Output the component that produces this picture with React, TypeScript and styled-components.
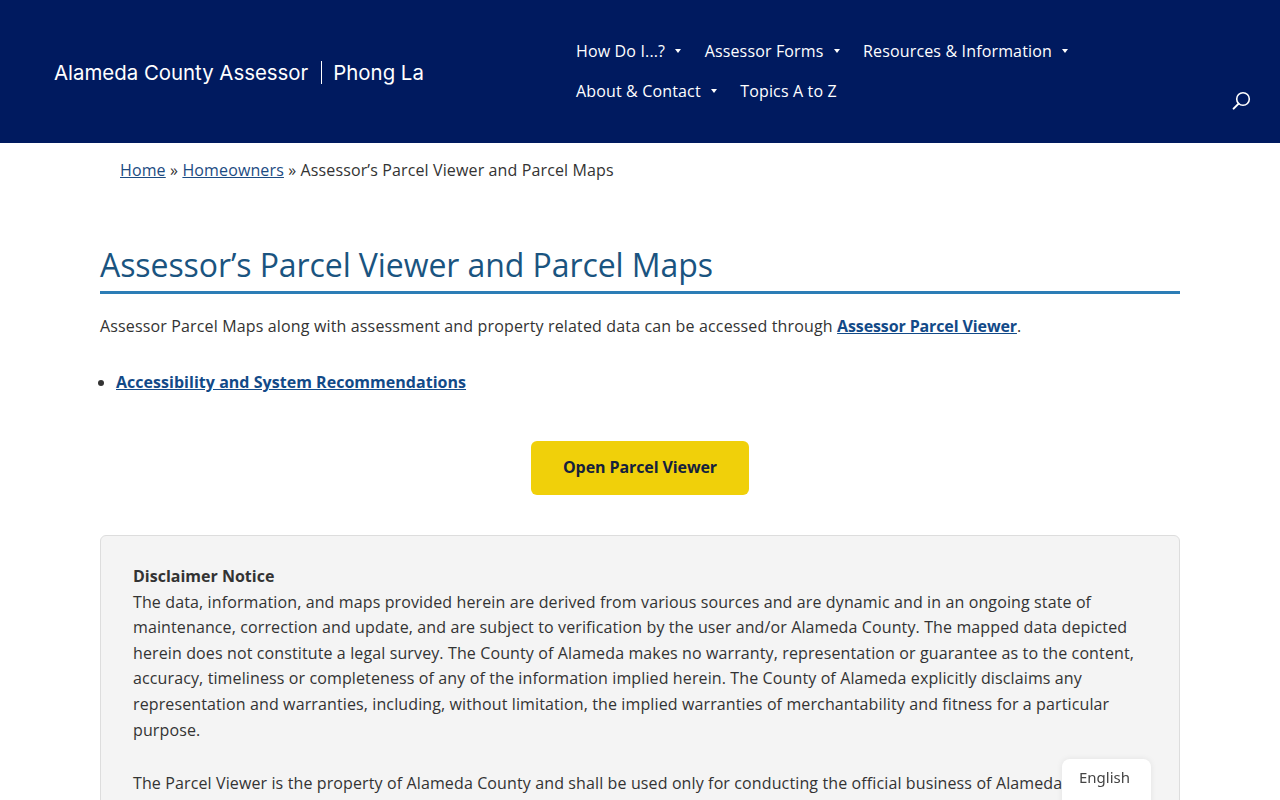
import React from "react";
import styled, { createGlobalStyle } from "styled-components";

const Global = createGlobalStyle`
  html, body { margin: 0; padding: 0; height: 800px; overflow: hidden; background: #fff; }
  body { font-family: "Open Sans", "Noto Sans", sans-serif; font-size: 16px; color: #333; letter-spacing: 0.13px; }
  strong, a { letter-spacing: 0; }
`;

const Header = styled.header`
  height: 143px;
  background: #001a5f;
  display: flex;
  position: relative;
`;
const Logo = styled.div`
  width: 576px;
  padding: 1px 0 0 54px;
  box-sizing: border-box;
  display: flex;
  align-items: center;
  height: 143px;
  color: #fff;
  font-family: "Inter", sans-serif;
  font-size: 20.4px;
  letter-spacing: 0;
`;
const Divider = styled.span`
  width: 1px;
  height: 23px;
  background: #fff;
  margin: 0 11px 0 13px;
`;
const Nav = styled.nav`
  display: flex;
  flex-wrap: wrap;
  align-content: flex-start;
  width: 560px;
  padding-top: 31px;
  column-gap: 23.5px;
`;
const NavItem = styled.a`
  display: flex;
  align-items: center;
  height: 40px;
  color: #fff;
  font-size: 16px;
  font-weight: 400;
  letter-spacing: 0.15px;
  white-space: nowrap;
`;
const Caret = styled.span`
  width: 0;
  height: 0;
  margin-left: 10px;
  border-left: 3px solid transparent;
  border-right: 3px solid transparent;
  border-top: 4px solid #fff;
`;
const SearchIcon = styled.svg`
  position: absolute;
  left: 1231px;
  top: 91px;
  width: 20px;
  height: 20px;
`;
const Crumbs = styled.div`
  padding: 16px 0 0 120px;
  line-height: 22px;
  height: 38px;
  a { color: #1c4b82; letter-spacing: 0.13px; }
`;
const Main = styled.main`
  width: 1080px;
  margin: 0 auto;
`;
const Title = styled.h1`
  margin: 44px 0 0;
  padding-bottom: 2px;
  font-size: 32px;
  font-weight: 400;
  letter-spacing: -0.08px;
  line-height: 48px;
  color: #1a5480;
  border-bottom: 3px solid #2c7db6;
`;
const Para = styled.p`
  margin: 19px 0 0;
  line-height: 26px;
  letter-spacing: 0.15px;
  a { color: #124a88; font-weight: 700; letter-spacing: -0.12px; }
`;
const Bullets = styled.ul`
  margin: 30px 0 0;
  padding-left: 16px;
  line-height: 26px;
  a { color: #124a88; font-weight: 700; letter-spacing: 0.03px; }
`;
const ButtonRow = styled.div`
  display: flex;
  justify-content: center;
  margin-top: 46px;
`;
const Button = styled.a`
  width: 218px;
  height: 54px;
  padding-bottom: 2px;
  box-sizing: border-box;
  display: flex;
  align-items: center;
  justify-content: center;
  background: #f0d00a;
  border-radius: 6px;
  color: #14213d;
  font-weight: 700;
  letter-spacing: -0.1px;
`;
const Notice = styled.section`
  margin-top: 40px;
  padding: 28px 32px;
  background: #f4f4f4;
  border: 1px solid #ddd;
  border-radius: 6px;
  line-height: 25.6px;
  letter-spacing: 0.12px;
  strong { letter-spacing: 0; }
  p { margin: 0 0 27.6px; }
`;
const Lang = styled.div`
  position: fixed;
  left: 1062px;
  top: 759px;
  width: 89px;
  height: 60px;
  box-sizing: border-box;
  padding: 7px 0 0 17px;
  background: #fff;
  border-radius: 8px;
  box-shadow: 0 0 6px rgba(0, 0, 0, 0.08);
  font-family: "Noto Sans", sans-serif;
  font-size: 15px;
  letter-spacing: 0;
  line-height: 22px;
  color: #444;
`;

export default function App() {
  return (
    <>
      <Global />
      <Header>
        <Logo>Alameda County Assessor<Divider />Phong La</Logo>
        <Nav>
          <NavItem>How Do I...?<Caret /></NavItem>
          <NavItem>Assessor Forms<Caret /></NavItem>
          <NavItem>Resources &amp; Information<Caret /></NavItem>
          <NavItem>About &amp; Contact<Caret /></NavItem>
          <NavItem>Topics A to Z</NavItem>
        </Nav>
        <SearchIcon viewBox="0 0 20 20" fill="none" stroke="#fff" strokeWidth="1.6">
          <circle cx="12" cy="8" r="6.3" />
          <path d="M7.6 12.6 L2.6 17.6" strokeWidth="2" strokeLinecap="round" />
        </SearchIcon>
      </Header>
      <Crumbs>
        <a href="#">Home</a> » <a href="#">Homeowners</a> » Assessor’s Parcel Viewer and Parcel Maps
      </Crumbs>
      <Main>
        <Title>Assessor’s Parcel Viewer and Parcel Maps</Title>
        <Para>
          Assessor Parcel Maps along with assessment and property related data can be accessed through{" "}
          <a href="#">Assessor Parcel Viewer</a>.
        </Para>
        <Bullets>
          <li><a href="#">Accessibility and System Recommendations</a></li>
        </Bullets>
        <ButtonRow>
          <Button>Open Parcel Viewer</Button>
        </ButtonRow>
        <Notice>
          <p>
            <strong>Disclaimer Notice</strong>
            <br />
            The data, information, and maps provided herein are derived from various sources and are dynamic and in an ongoing state of maintenance, correction and update, and are subject to verification by the user and/or Alameda County. The mapped data depicted herein does not constitute a legal survey. The County of Alameda makes no warranty, representation or guarantee as to the content, accuracy, timeliness or completeness of any of the information implied herein. The County of Alameda explicitly disclaims any representation and warranties, including, without limitation, the implied warranties of merchantability and fitness for a particular purpose.
          </p>
          <p>The Parcel Viewer is the property of Alameda County and shall be used only for conducting the official business of Alameda</p>
        </Notice>
      </Main>
      <Lang>English</Lang>
    </>
  );
}
